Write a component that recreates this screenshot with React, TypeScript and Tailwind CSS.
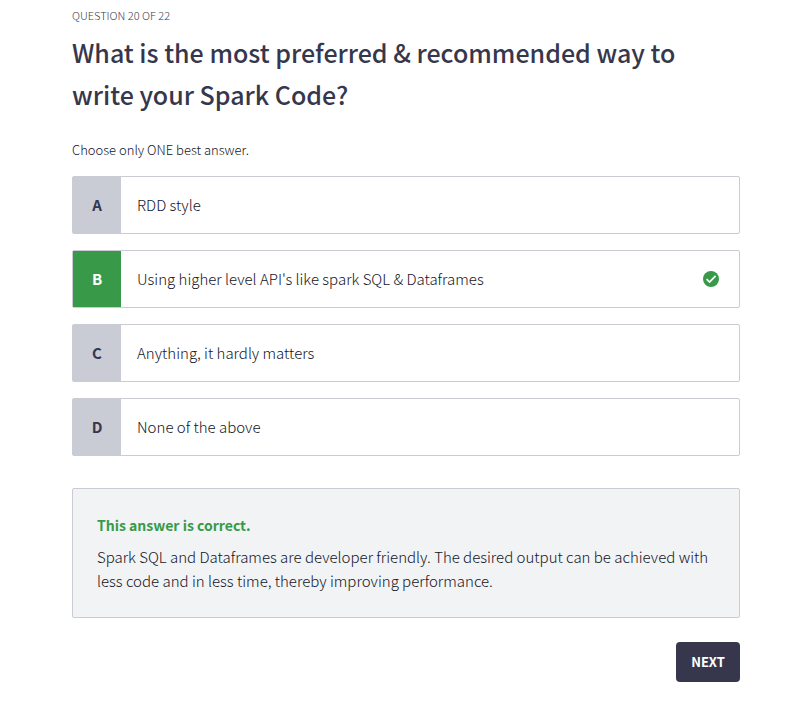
import React, { useState } from "react";

const options = [
  { letter: "A", text: "RDD style", correct: false },
  { letter: "B", text: "Using higher level API's like spark SQL & Dataframes", correct: true },
  { letter: "C", text: "Anything, it hardly matters", correct: false },
  { letter: "D", text: "None of the above", correct: false },
];

function CheckIcon() {
  return (
    <svg viewBox="0 0 16 16" className="mr-5 size-4 shrink-0" role="img" aria-label="Correct">
      <circle cx="8" cy="8" r="8" fill="#389a48" />
      <path d="M3.6 8.1l3 3 6-6.2" fill="none" stroke="#fff" strokeWidth="1.7" />
    </svg>
  );
}

export default function App() {
  const [selected, setSelected] = useState("B");
  return (
    <main className="pl-[72px] pr-16 pt-[7px] font-['Noto_Sans_CJK_SC',sans-serif] text-[#36374c]">
      <p className="text-[11px] font-light leading-4 text-[#3c3d4c]">QUESTION 20 OF 22</p>
      <h1 className="mt-2 text-[25px] font-medium leading-[42px]">
        What is the most preferred &amp; recommended way to write your Spark Code?
      </h1>
      <p className="mt-[25px] text-[13px] font-light leading-5 text-[#14151f]">Choose only ONE best answer.</p>
      <div className="mt-4 flex flex-col gap-4">
        {options.map((o) => (
          <button
            key={o.letter}
            type="button"
            aria-pressed={selected === o.letter}
            onClick={() => setSelected(o.letter)}
            className="flex h-[58px] items-center rounded-xs border border-[#c9cbd5] text-left"
          >
            <span
              className={
                "flex w-12 items-center justify-center self-stretch text-[15px] font-bold " +
                (selected === o.letter ? "bg-[#389a48] text-white" : "bg-[#c9cbd5]")
              }
            >
              {o.letter}
            </span>
            <span className="flex-1 px-4 text-[15px] font-light leading-6 text-[#14151f]">{o.text}</span>
            {o.correct && <CheckIcon />}
          </button>
        ))}
      </div>
      <section className="mt-8 rounded-xs border border-[#c9cbd5] bg-[#f1f3f5] p-6">
        <h2 className="text-[14px] font-bold leading-6 text-[#389a48]">This answer is correct.</h2>
        <p className="mt-2 text-[15px] font-light leading-6 text-[#14151f]">
          Spark SQL and Dataframes are developer friendly. The desired output can be achieved with
          less code and in less time, thereby improving performance.
        </p>
      </section>
      <div className="mt-6 flex justify-end">
        <button type="button" className="h-10 w-16 rounded bg-[#36374c] text-[13px] font-bold text-white">
          NEXT
        </button>
      </div>
    </main>
  );
}
